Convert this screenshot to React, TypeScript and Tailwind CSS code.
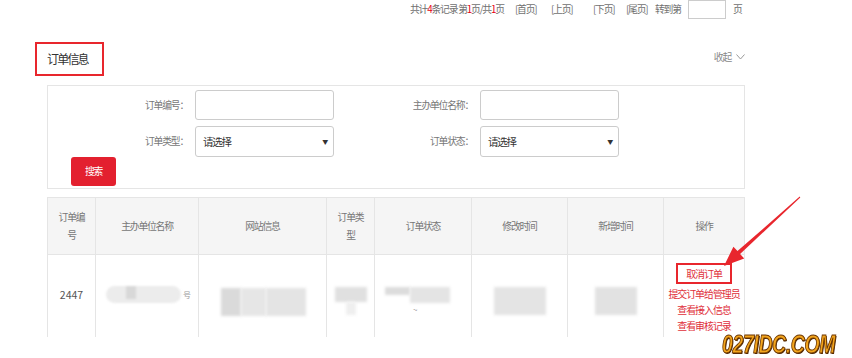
import React from 'react';

const font = { fontFamily: '"Noto Sans CJK SC", "Microsoft YaHei", sans-serif' };

const cols = [
  { w: 'w-[48px]', label: '订单编\n号' },
  { w: 'w-[103px]', label: '主办单位名称' },
  { w: 'w-[128px]', label: '网站信息' },
  { w: 'w-[48px]', label: '订单类\n型' },
  { w: 'w-[97px]', label: '订单状态' },
  { w: 'w-[96px]', label: '修改时间' },
  { w: 'w-[96px]', label: '新增时间' },
  { w: 'flex-1', label: '操作' },
];

const cjk = 'text-[9.8px] tracking-[-1.2px]';

function Blur({ className }: { className: string }) {
  return <div className={`blur-[1.5px] ${className}`} />;
}

export default function App() {
  return (
    <div
      className="relative w-[852px] h-[358px] overflow-hidden bg-white text-[#666]"
      style={font}
    >
      {/* pagination */}
      <div className={`flex items-center h-[19px] pl-[410px] text-[#707070] ${cjk}`}>
        <span className="w-[105px] whitespace-nowrap">
          共计<span className="text-[#e60012]">4</span>条记录 第<span className="text-[#e60012]">1</span>页/共
          <span className="text-[#e60012]">1</span>页
        </span>
        <span className="w-[36px] whitespace-nowrap">[首页]</span>
        <span className="w-[42px] whitespace-nowrap">[上页]</span>
        <span className="w-[33px] whitespace-nowrap">[下页]</span>
        <span className="w-[29px] whitespace-nowrap">[尾页]</span>
        <span className="w-[33px] whitespace-nowrap">转到第</span>
        <div className="w-[38px] h-[19px] border border-[#ccc] -mt-[1px]" />
        <span className="ml-[7px]">页</span>
      </div>

      {/* title row */}
      <div className="flex items-start w-[745px] mt-[23px] pl-[35px]">
        <div className="border-2 border-[#e8262d] h-[34px] w-[69px] flex items-center pl-[10px] text-[12px] tracking-[-1.8px] text-[#333]">
          订单信息
        </div>
        <div className={`ml-auto mt-[8px] flex items-center gap-[5px] text-[#888] ${cjk}`}>
          收起
          <svg width="9" height="6" viewBox="0 0 9 6" fill="none" stroke="#999" strokeWidth="1">
            <path d="M0.5 0.5 L4.5 5 L8.5 0.5" />
          </svg>
        </div>
      </div>

      {/* filter panel */}
      <div className={`ml-[47px] mt-[9px] w-[698px] h-[104px] border border-[#e5e5e5] relative ${cjk}`}>
        <div className="flex flex-col gap-[6px] pt-[4px]">
          <div className="flex items-center">
            <div className="w-[140px] text-right text-[#777]">订单编号：</div>
            <div className="ml-[7px] w-[139px] h-[30px] border border-[#ccc] rounded-[3px]" />
            <div className="w-[139px] text-right text-[#777]">主办单位名称：</div>
            <div className="ml-[7px] w-[139px] h-[30px] border border-[#ccc] rounded-[3px]" />
          </div>
          <div className="flex items-center">
            <div className="w-[140px] text-right text-[#777]">订单类型：</div>
            <div className="ml-[7px] w-[139px] h-[31px] border border-[#ccc] rounded-[3px] flex items-center pl-[7px] pr-[6px] text-[#333] text-[10.5px]">
              请选择
              <span className="ml-auto text-[6px] text-[#333]">▼</span>
            </div>
            <div className="w-[139px] text-right text-[#777]">订单状态：</div>
            <div className="ml-[7px] w-[139px] h-[31px] border border-[#ccc] rounded-[3px] flex items-center pl-[7px] pr-[6px] text-[#333] text-[10.5px]">
              请选择
              <span className="ml-auto text-[6px] text-[#333]">▼</span>
            </div>
          </div>
        </div>
        <button className="absolute left-[23px] top-[71px] w-[45px] h-[29px] rounded-[3px] bg-[#e3202f] text-white">
          搜索
        </button>
      </div>

      {/* table */}
      <div className={`ml-[47px] mt-[8px] w-[698px] border-l border-r border-t border-[#e5e5e5] ${cjk}`}>
        <div className="flex h-[57px] bg-[#f5f5f5] border-b border-[#e5e5e5]">
          {cols.map((c, i) => (
            <div
              key={i}
              className={`${c.w} shrink-0 flex items-center justify-center text-center whitespace-pre-line leading-[18px] text-[#777] ${
                i < cols.length - 1 ? 'border-r border-[#e5e5e5]' : ''
              }`}
            >
              {c.label}
            </div>
          ))}
        </div>
        <div className="flex h-[82px]">
          <div className="w-[48px] shrink-0 border-r border-[#e5e5e5] flex items-center justify-center text-[#555] text-[10.5px] tracking-normal pb-[3px]">
            2447
          </div>
          <div className="w-[103px] shrink-0 border-r border-[#e5e5e5] flex items-center pl-[10px] pb-[3px]">
            <div className="w-[75px] h-[17px] rounded-full bg-[#ececec] blur-[1px] relative">
              <div className="absolute left-[20px] top-0 w-[10px] h-[13px] bg-[#d8d8d8]" />
            </div>
            <span className="ml-[2px] text-[8px] text-[#999]">号</span>
          </div>
          <div className="w-[128px] shrink-0 border-r border-[#e5e5e5] flex items-center pl-[22px] pt-[12px]">
            <div className="flex h-[28px] w-[85px]">
              <Blur className="w-[20px] h-full bg-[#dadada]" />
              <Blur className="w-[25px] h-full bg-[#e6e6e6]" />
              <Blur className="w-[40px] h-full bg-[#e4e4e4]" />
            </div>
          </div>
          <div className="w-[48px] shrink-0 border-r border-[#e5e5e5] flex items-start justify-center pt-[32px]">
            <div className="flex flex-col items-center">
              <Blur className="w-[32px] h-[15px] bg-[#e0e0e0]" />
              <Blur className="w-[10px] h-[13px] bg-[#efefef]" />
            </div>
          </div>
          <div className="w-[97px] shrink-0 border-r border-[#e5e5e5] flex items-start pl-[10px] pt-[32px]">
            <div className="flex flex-col">
              <div className="flex">
                <Blur className="w-[25px] h-[8px] bg-[#dcdcdc]" />
                <Blur className="w-[40px] h-[16px] bg-[#e4e4e4]" />
              </div>
              <span className="text-[8px] text-[#999] mt-[1px] ml-[28px]">~</span>
            </div>
          </div>
          <div className="w-[96px] shrink-0 border-r border-[#e5e5e5] flex items-start justify-center pt-[32px]">
            <Blur className="w-[52px] h-[28px] bg-[#e4e4e4]" />
          </div>
          <div className="w-[96px] shrink-0 border-r border-[#e5e5e5] flex items-start justify-center pt-[32px]">
            <Blur className="w-[42px] h-[28px] bg-[#e2e2e2]" />
          </div>
          <div className="flex-1 flex flex-col items-center pt-[8px] text-[10px] tracking-[-1.1px] text-[#e02f3a] leading-[16px]">
            <div className="border-2 border-[#e8262d] w-[56px] h-[21px] flex items-center justify-center">
              取消订单
            </div>
            <div className="mt-[2px] whitespace-nowrap">提交订单给管理员</div>
            <div className="whitespace-nowrap">查看接入信息</div>
            <div className="whitespace-nowrap">查看审核记录</div>
          </div>
        </div>
      </div>

      {/* red arrow overlay */}
      <svg
        className="absolute left-0 top-0 pointer-events-none"
        width="852"
        height="358"
        viewBox="0 0 852 358"
      >
        <path
          d="M800.3 197.4 L740.1 254.1 L744.2 258.5 L724 266 L733.4 246.7 L737.5 251.1 L799.7 196.6 Z"
          fill="#e8262d"
        />
      </svg>

      {/* watermark */}
      <div
        className="absolute left-[722px] top-[326px] origin-left scale-x-[0.78] text-[25px] font-black italic tracking-[-0.5px] text-[#f2a41c] whitespace-nowrap"
        style={{
          fontFamily: '"Liberation Sans", sans-serif',
          WebkitTextStroke: '1px #6b3500',
          textShadow: '1px 1px 0 #4a2400',
        }}
      >
        027IDC.COM
      </div>
    </div>
  );
}
